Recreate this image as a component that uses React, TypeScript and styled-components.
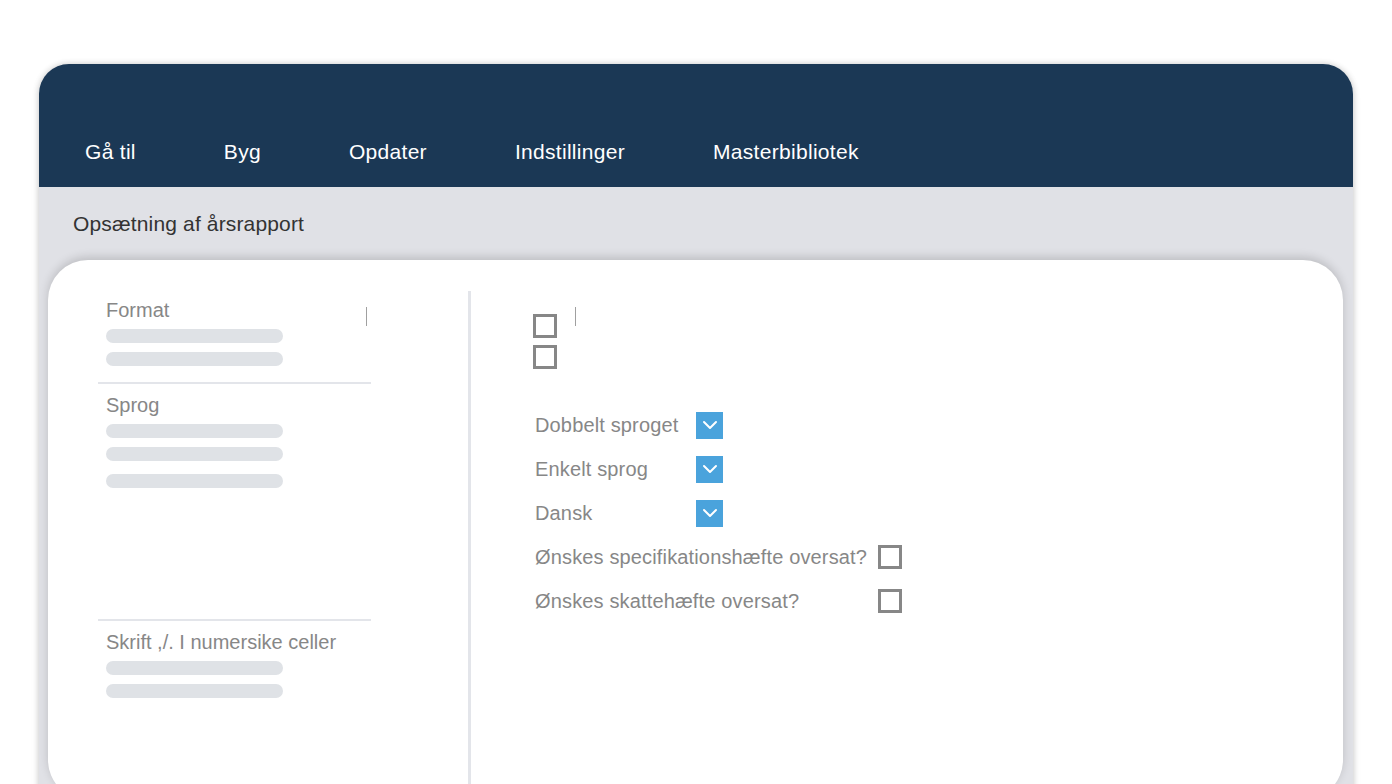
import React from 'react';
import styled, { createGlobalStyle } from 'styled-components';

const TEXT_MUTED = '#878787';
const NAVY = '#1b3855';
const BAND = '#e0e1e6';
const BAR = '#dfe2e6';
const BLUE = '#4aa3dc';

const GlobalStyle = createGlobalStyle`
  html, body {
    margin: 0;
    padding: 0;
    height: 784px;
    overflow: hidden;
    background: #ffffff;
  }
  * {
    box-sizing: border-box;
  }
  body {
    font-family: "Liberation Sans", Arial, sans-serif;
  }
`;

const Page = styled('div')`
  padding: 64px 39px 0;
`;

const Frame = styled('div')`
  border-radius: 30px 30px 0 0;
  background: ${BAND};
  height: 760px;
  overflow: hidden;
  box-shadow: 0 0 6px rgba(0, 0, 0, 0.18), 0 2px 10px rgba(0, 0, 0, 0.08);
`;

const Header = styled('header')`
  height: 123px;
  background: ${NAVY};
  display: flex;
  align-items: flex-end;
  padding: 0 46px 23px;
  gap: 88px;
`;

const NavItem = styled('a')`
  color: #ffffff;
  font-size: 21px;
  line-height: 24px;
  letter-spacing: 0.3px;
  text-decoration: none;
`;

const Title = styled('h1')`
  margin: 0;
  padding: 25px 34px 24px;
  font-size: 21px;
  line-height: 24px;
  letter-spacing: 0.15px;
  font-weight: 400;
  color: #333333;
`;

const Card = styled('section')`
  margin: 0 10px 0 9px;
  height: 540px;
  background: #ffffff;
  border-radius: 40px;
  box-shadow: 0 -3px 10px rgba(0, 0, 0, 0.16);
  display: grid;
  grid-template-columns: 420px 1fr;
  padding-top: 31px;
`;

const LeftPane = styled('div')`
  padding-left: 50px;
`;

const LeftColumn = styled('div')`
  width: 273px;
`;

const Section = styled('div')<{ $height: number; $top?: number; $divider?: boolean }>`
  position: relative;
  height: ${p => p.$height}px;
  padding: ${p => p.$top ?? 7}px 8px 0;
  border-bottom: ${p => (p.$divider ? `2px solid #e3e5ea` : 'none')};
`;

const SectionLabel = styled('div')`
  font-size: 20px;
  line-height: 24px;
  color: ${TEXT_MUTED};
  margin-bottom: 7px;
`;

const SkeletonBar = styled('div')<{ $gap?: number }>`
  width: 177px;
  height: 14px;
  border-radius: 7px;
  background: ${BAR};
  margin-bottom: ${p => p.$gap ?? 9}px;
`;

const Caret = styled('span')<{ $left: number }>`
  position: absolute;
  top: 16px;
  left: ${p => p.$left}px;
  width: 1px;
  height: 19px;
  background: #a0a0a0;
`;

const RightPane = styled('div')`
  position: relative;
  border-left: 3px solid #e3e5ea;
  padding: 23px 0 0 62px;
`;

const CheckStack = styled('div')`
  display: flex;
  flex-direction: column;
  gap: 7px;
`;

const CheckBox = styled('span')`
  display: inline-block;
  width: 24px;
  height: 24px;
  border: 3px solid ${TEXT_MUTED};
  background: #ffffff;
`;

const Rows = styled('div')`
  margin-top: 34px;
  display: flex;
  flex-direction: column;
`;

const Row = styled('div')<{ $labelWidth: number }>`
  height: 44px;
  display: grid;
  grid-template-columns: ${p => p.$labelWidth}px auto;
  align-items: center;
`;

const RowLabel = styled('span')`
  font-size: 20px;
  line-height: 24px;
  letter-spacing: 0.15px;
  color: ${TEXT_MUTED};
  padding-left: 2px;
  white-space: nowrap;
`;

const Select = styled('span')`
  width: 27px;
  height: 27px;
  background: ${BLUE};
  display: flex;
  align-items: center;
  justify-content: center;
`;

function Chevron() {
  return (
    <svg width="16" height="10" viewBox="0 0 16 10" fill="none">
      <path d="M2 2 L8 8 L14 2" stroke="#ffffff" strokeWidth="2" strokeLinecap="round" strokeLinejoin="round" />
    </svg>
  );
}

const nav = ['Gå til', 'Byg', 'Opdater', 'Indstillinger', 'Masterbibliotek'];

const selects = ['Dobbelt sproget', 'Enkelt sprog', 'Dansk'];
const questions = ['Ønskes specifikationshæfte oversat?', 'Ønskes skattehæfte oversat?'];

export default function App() {
  return (
    <>
      <GlobalStyle />
      <Page>
        <Frame>
          <Header>
            {nav.map(item => (
              <NavItem key={item}>{item}</NavItem>
            ))}
          </Header>
          <Title>Opsætning af årsrapport</Title>
          <Card>
            <LeftPane>
              <LeftColumn>
                <Section $height={93} $divider>
                  <SectionLabel>Format</SectionLabel>
                  <SkeletonBar />
                  <SkeletonBar />
                  <Caret $left={268} />
                </Section>
                <Section $height={237} $top={9} $divider>
                  <SectionLabel>Sprog</SectionLabel>
                  <SkeletonBar />
                  <SkeletonBar $gap={13} />
                  <SkeletonBar />
                </Section>
                <Section $height={120} $top={9}>
                  <SectionLabel>Skrift ,/. I numersike celler</SectionLabel>
                  <SkeletonBar />
                  <SkeletonBar />
                </Section>
              </LeftColumn>
            </LeftPane>
            <RightPane>
              <Caret $left={104} />
              <CheckStack>
                <CheckBox />
                <CheckBox />
              </CheckStack>
              <Rows>
                {selects.map(label => (
                  <Row key={label} $labelWidth={163}>
                    <RowLabel>{label}</RowLabel>
                    <Select>
                      <Chevron />
                    </Select>
                  </Row>
                ))}
                {questions.map(label => (
                  <Row key={label} $labelWidth={345}>
                    <RowLabel>{label}</RowLabel>
                    <CheckBox />
                  </Row>
                ))}
              </Rows>
            </RightPane>
          </Card>
        </Frame>
      </Page>
    </>
  );
}
